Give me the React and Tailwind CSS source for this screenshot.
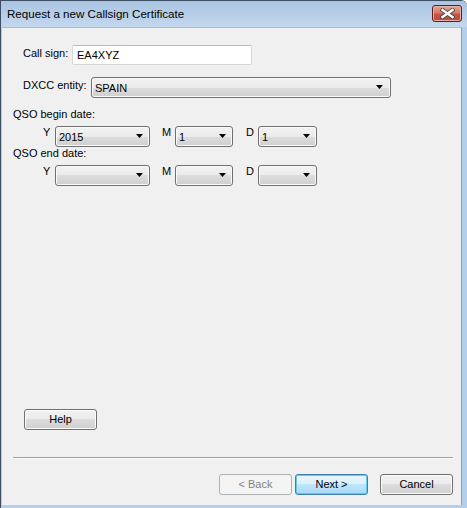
import React from "react";

const font = { fontFamily: '"Liberation Sans", Arial, sans-serif' };

function Arrow() {
  return (
    <svg width="7" height="4" viewBox="0 0 7 4" className="shrink-0">
      <polygon points="0,0 7,0 3.5,4" fill="#000" />
    </svg>
  );
}

function Combo({ value, className }) {
  return (
    <div
      className={
        "h-[21px] flex items-center justify-between pl-[3px] pr-[6px] pt-[2px] border border-[#707070] rounded-[3px] bg-[linear-gradient(to_bottom,#f2f2f2_0%,#ebebeb_50%,#dddddd_50%,#cfcfcf_100%)] shadow-[inset_0_0_0_1px_#fafafa] " +
        className
      }
    >
      <span className="leading-[13px]">{value}</span>
      <span className="-mt-[2px]">
        <Arrow />
      </span>
    </div>
  );
}

function Button({ children, kind }) {
  let cls =
    "border-[#707070] bg-[linear-gradient(to_bottom,#f2f2f2_0%,#ebebeb_50%,#dddddd_50%,#cfcfcf_100%)] shadow-[inset_0_0_0_1px_#fcfcfc] text-black";
  if (kind === "disabled")
    cls = "border-[#adb2b5] bg-[#f4f4f4] text-[#838383]";
  if (kind === "default")
    cls =
      "border-[#3c7fb1] bg-[linear-gradient(to_bottom,#eaf6fd_0%,#d9f0fc_50%,#bee6fd_50%,#a7d9f5_100%)] shadow-[inset_0_0_0_1px_#5fc8f4] text-black";
  return (
    <div
      className={
        "w-[73px] h-[21px] flex items-center justify-center border rounded-[3px] leading-[13px] " +
        cls
      }
    >
      {children}
    </div>
  );
}

export default function App() {
  return (
    <div
      style={font}
      className="w-[467px] h-[508px] flex flex-col bg-[#b3cfec] border-t border-l border-[#3d4e63] rounded-tr-[6px] overflow-hidden text-[11px] text-black"
    >
      {/* title bar */}
      <div className="h-[26px] shrink-0 flex justify-between bg-[linear-gradient(to_bottom,#a9c4e2,#c4d8ee)]">
        <div className="self-center pl-[6px] text-[11.6px] leading-[14px] text-black">
          Request a new Callsign Certificate
        </div>
        <div className="mt-[4px] mr-[5px] w-[30px] h-[17px] flex items-center justify-center rounded-[3px] border border-[#5a1f1a] bg-[linear-gradient(to_bottom,#e5a394_0%,#d87a6a_45%,#c75545_55%,#c0473a_100%)] shadow-[inset_0_0_0_1px_#eab0a3]">
          <svg width="15" height="11" viewBox="0 0 15 11">
            <path d="M2.5 2 L12.5 9 M12.5 2 L2.5 9" stroke="#4a4a4a" strokeWidth="4.2" strokeLinecap="square" />
            <path d="M2.5 2 L12.5 9 M12.5 2 L2.5 9" stroke="#ffffff" strokeWidth="2.4" strokeLinecap="square" />
          </svg>
        </div>
      </div>

      {/* client area */}
      <div className="flex-1 ml-[1px] mb-[3px] w-[460px] border-t border-[#a8bcd2] border-r border-r-[#8d9cad] bg-[#f0f0f0] flex flex-col">
        {/* call sign */}
        <div className="mt-[17px] flex items-center">
          <div className="ml-[21px] w-[49px] mb-[4px]">Call sign:</div>
          <div className="w-[180px] h-[20px] flex items-center pl-[4px] bg-white border border-[#d5d7db] border-t-[#b9bbc0] rounded-[2px]">
            EA4XYZ
          </div>
        </div>

        {/* dxcc */}
        <div className="mt-[11px] flex items-center">
          <div className="ml-[21px] w-[68px] mb-[3px]">DXCC entity:</div>
          <Combo value="SPAIN" className="w-[300px] pr-[7px]" />
        </div>

        {/* begin date */}
        <div className="mt-[10px] ml-[11px] leading-[13px]">QSO begin date:</div>
        <div className="mt-[5px] flex items-start leading-[13px]">
          <div className="ml-[41px] w-[12px]">Y</div>
          <Combo value="2015" className="w-[95px]" />
          <div className="ml-[12px] w-[13px]">M</div>
          <Combo value="1" className="w-[58px]" />
          <div className="ml-[13px] w-[12px]">D</div>
          <Combo value="1" className="w-[59px]" />
        </div>

        {/* end date */}
        <div className="mt-[0px] ml-[11px] leading-[13px]">QSO end date:</div>
        <div className="mt-[5px] flex items-start leading-[13px]">
          <div className="ml-[41px] w-[12px]">Y</div>
          <Combo value="" className="w-[95px]" />
          <div className="ml-[12px] w-[13px]">M</div>
          <Combo value="" className="w-[58px]" />
          <div className="ml-[13px] w-[12px]">D</div>
          <Combo value="" className="w-[59px]" />
        </div>

        <div className="flex-1" />

        <div className="ml-[22px]">
          <Button>Help</Button>
        </div>

        <div className="mt-[27px] ml-[11px] w-[440px] h-[2px] border-t border-[#a0a0a0] border-b border-b-white" />

        <div className="mt-[15px] mb-[10px] flex">
          <div className="ml-[217px]">
            <Button kind="disabled">&lt; Back</Button>
          </div>
          <div className="ml-[3px]">
            <Button kind="default">Next &gt;</Button>
          </div>
          <div className="ml-[12px]">
            <Button>Cancel</Button>
          </div>
        </div>
      </div>
    </div>
  );
}
